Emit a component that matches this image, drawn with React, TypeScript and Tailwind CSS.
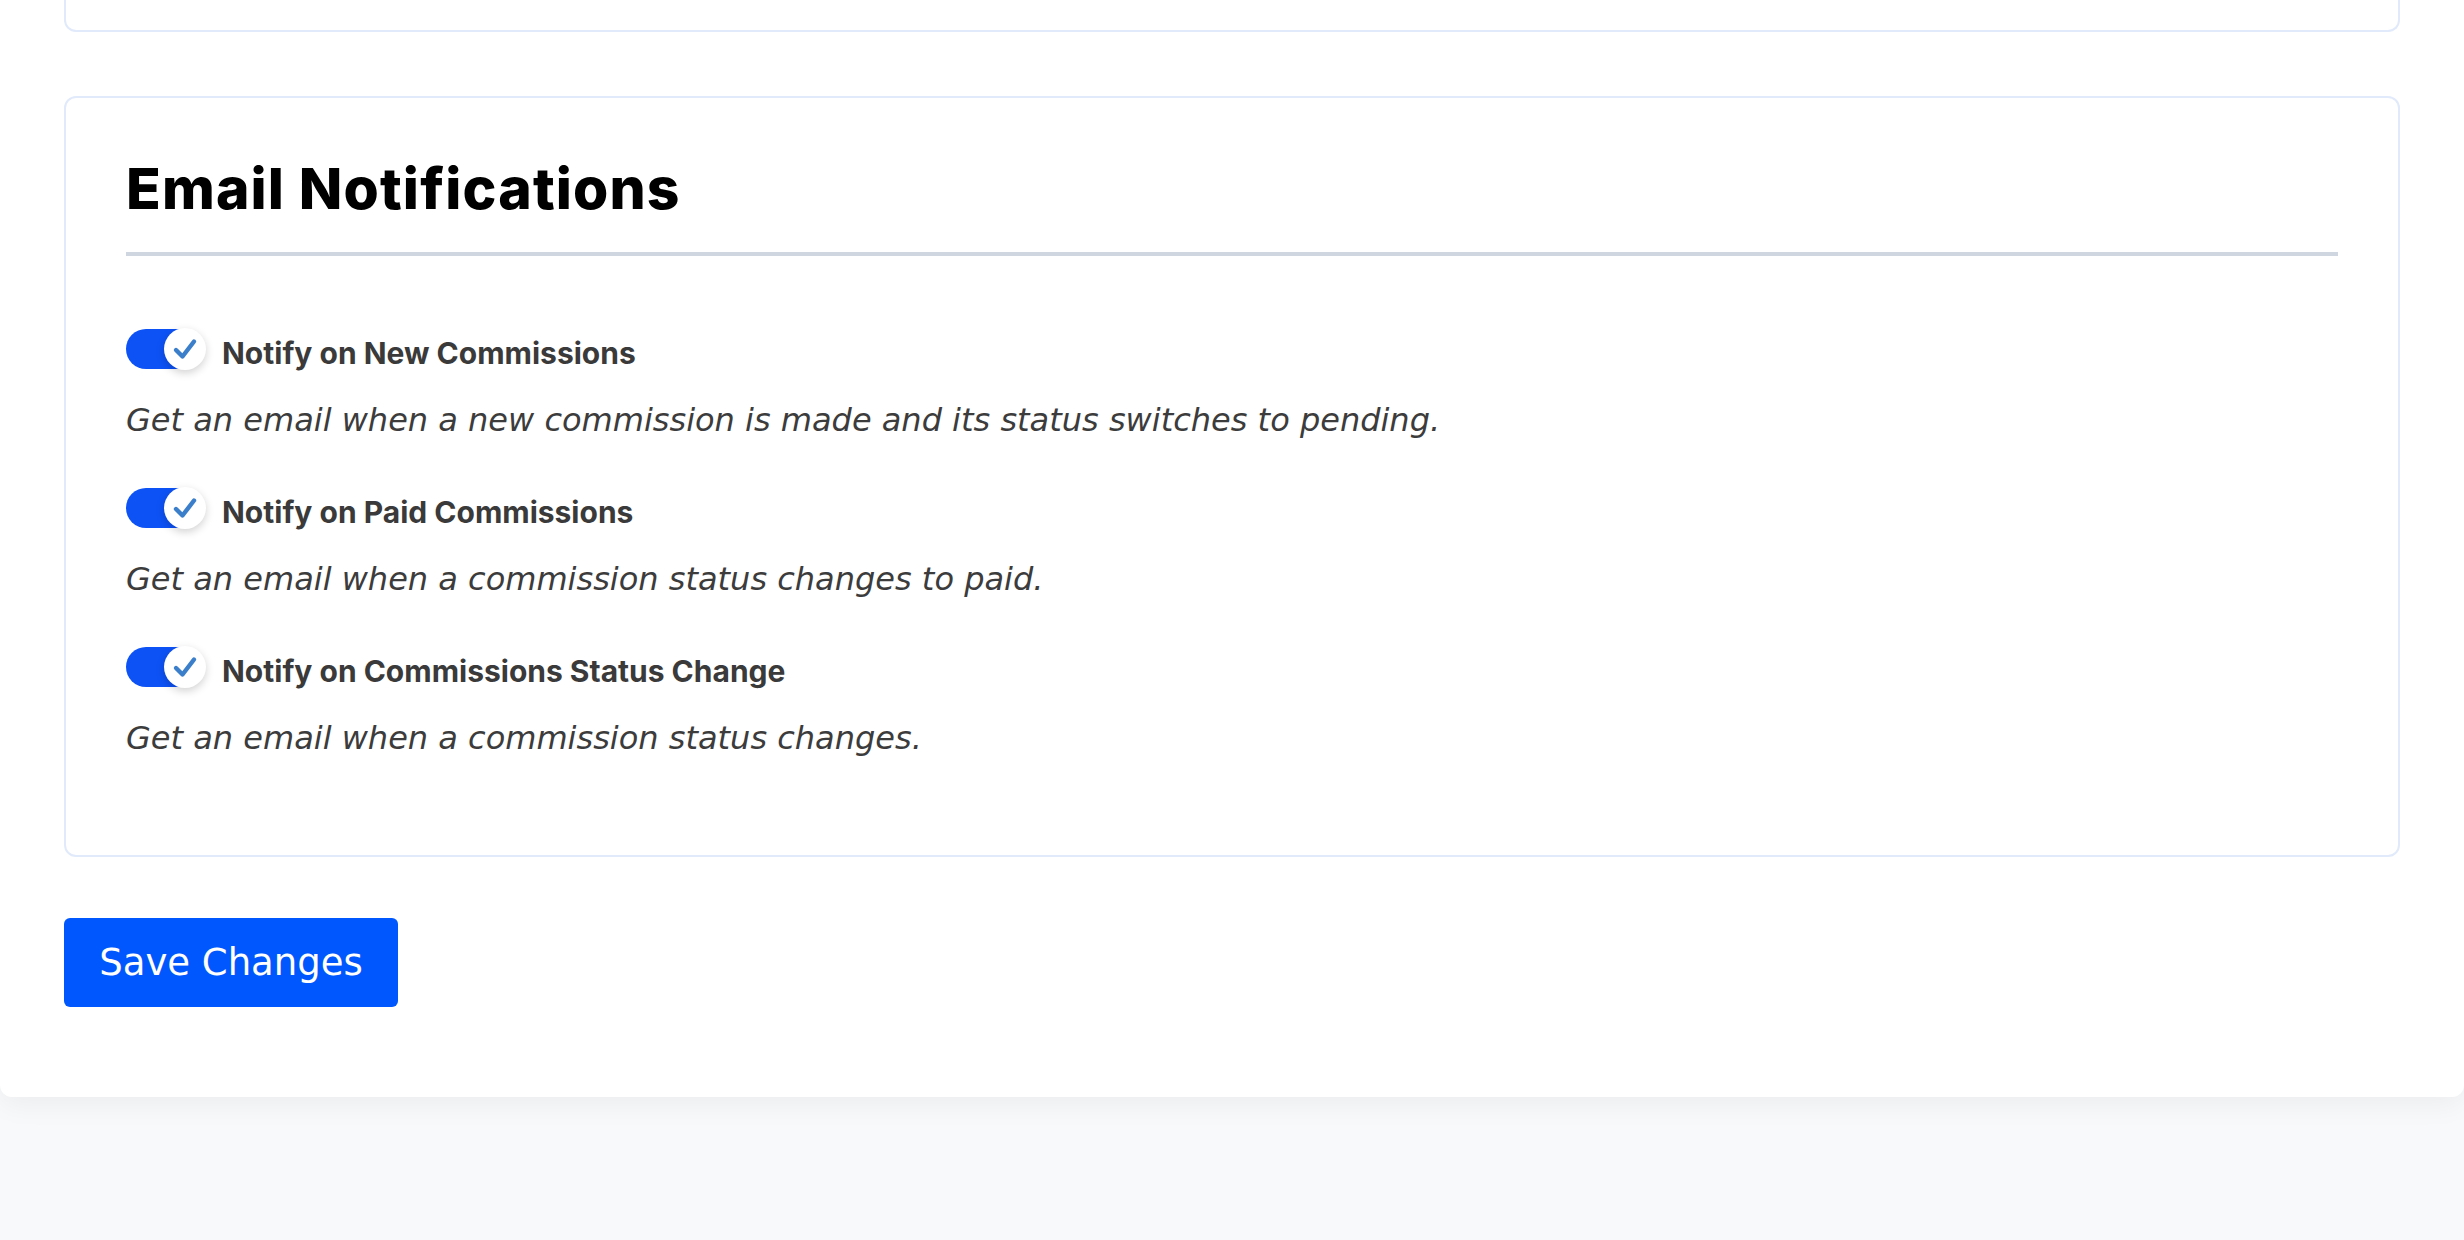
import { useState } from "react"

const notifications = [
  {
    id: "new",
    label: "Notify on New Commissions",
    description: "Get an email when a new commission is made and its status switches to pending.",
  },
  {
    id: "paid",
    label: "Notify on Paid Commissions",
    description: "Get an email when a commission status changes to paid.",
  },
  {
    id: "status",
    label: "Notify on Commissions Status Change",
    description: "Get an email when a commission status changes.",
  },
]

function Toggle({ checked, onChange }: { checked: boolean; onChange: () => void }) {
  return (
    <button
      type="button"
      role="switch"
      aria-checked={checked}
      onClick={onChange}
      className="relative flex h-[44px] w-[82px] shrink-0 items-center"
    >
      <span
        className={`block h-[40px] w-[78px] rounded-full ${checked ? "bg-[#0d52f5]" : "bg-[#cbd5e1]"}`}
      />
      <span
        className={`absolute top-[1px] flex h-[42px] w-[42px] items-center justify-center rounded-full bg-white shadow-[0_3px_8px_rgba(0,0,0,0.18)] ${checked ? "left-[38px]" : "left-0"}`}
      >
        {checked && (
          <svg width="26" height="24" viewBox="0 0 26 24" fill="none">
            <path
              d="M4 13 L10.5 19.5 L22 4.5"
              stroke="#3b7fcb"
              strokeWidth="4.4"
              strokeLinecap="round"
              strokeLinejoin="round"
            />
          </svg>
        )}
      </span>
    </button>
  )
}

export default function App() {
  const [enabled, setEnabled] = useState<Record<string, boolean>>({
    new: true,
    paid: true,
    status: true,
  })

  return (
    <div className="min-h-screen bg-[#f7f9fa]">
      <div className="rounded-b-[12px] bg-white px-[64px] pb-[90px] shadow-[0_8px_28px_rgba(0,0,0,0.05)]">
        <div className="h-[32px] rounded-b-[12px] border-2 border-t-0 border-[#e1eafb]" />

        <div className="mt-[64px] rounded-[12px] border-2 border-[#e1eafb] px-[60px] pt-[62px] pb-[97px]">
          <h2 className="font-['Inter',sans-serif] text-[57px] font-extrabold leading-none tracking-[0.02em] text-black">
            Email Notifications
          </h2>
          <div className="mt-[35px] h-[4px] bg-[#cfd6e0]" />

          <div className="mt-[71px] flex flex-col gap-[46px]">
            {notifications.map((n) => (
              <div key={n.id}>
                <div className="flex h-[44px] items-center gap-[14px]">
                  <Toggle
                    checked={enabled[n.id]}
                    onChange={() => setEnabled((s) => ({ ...s, [n.id]: !s[n.id] }))}
                  />
                  <span className="pt-[8px] font-['Inter',sans-serif] text-[30px] font-bold leading-[36px] text-[#3a3a3a]">
                    {n.label}
                  </span>
                </div>
                <p className="mt-[29px] font-['DejaVu_Sans',sans-serif] text-[32px] italic leading-[40px] text-[#3c3c3c]">
                  {n.description}
                </p>
              </div>
            ))}
          </div>
        </div>

        <button
          type="button"
          className="mt-[61px] flex h-[89px] w-[334px] items-center justify-center rounded-[6px] bg-[#0057fe] font-['DejaVu_Sans',sans-serif] text-[37px] text-white"
        >
          Save Changes
        </button>
      </div>
    </div>
  )
}
